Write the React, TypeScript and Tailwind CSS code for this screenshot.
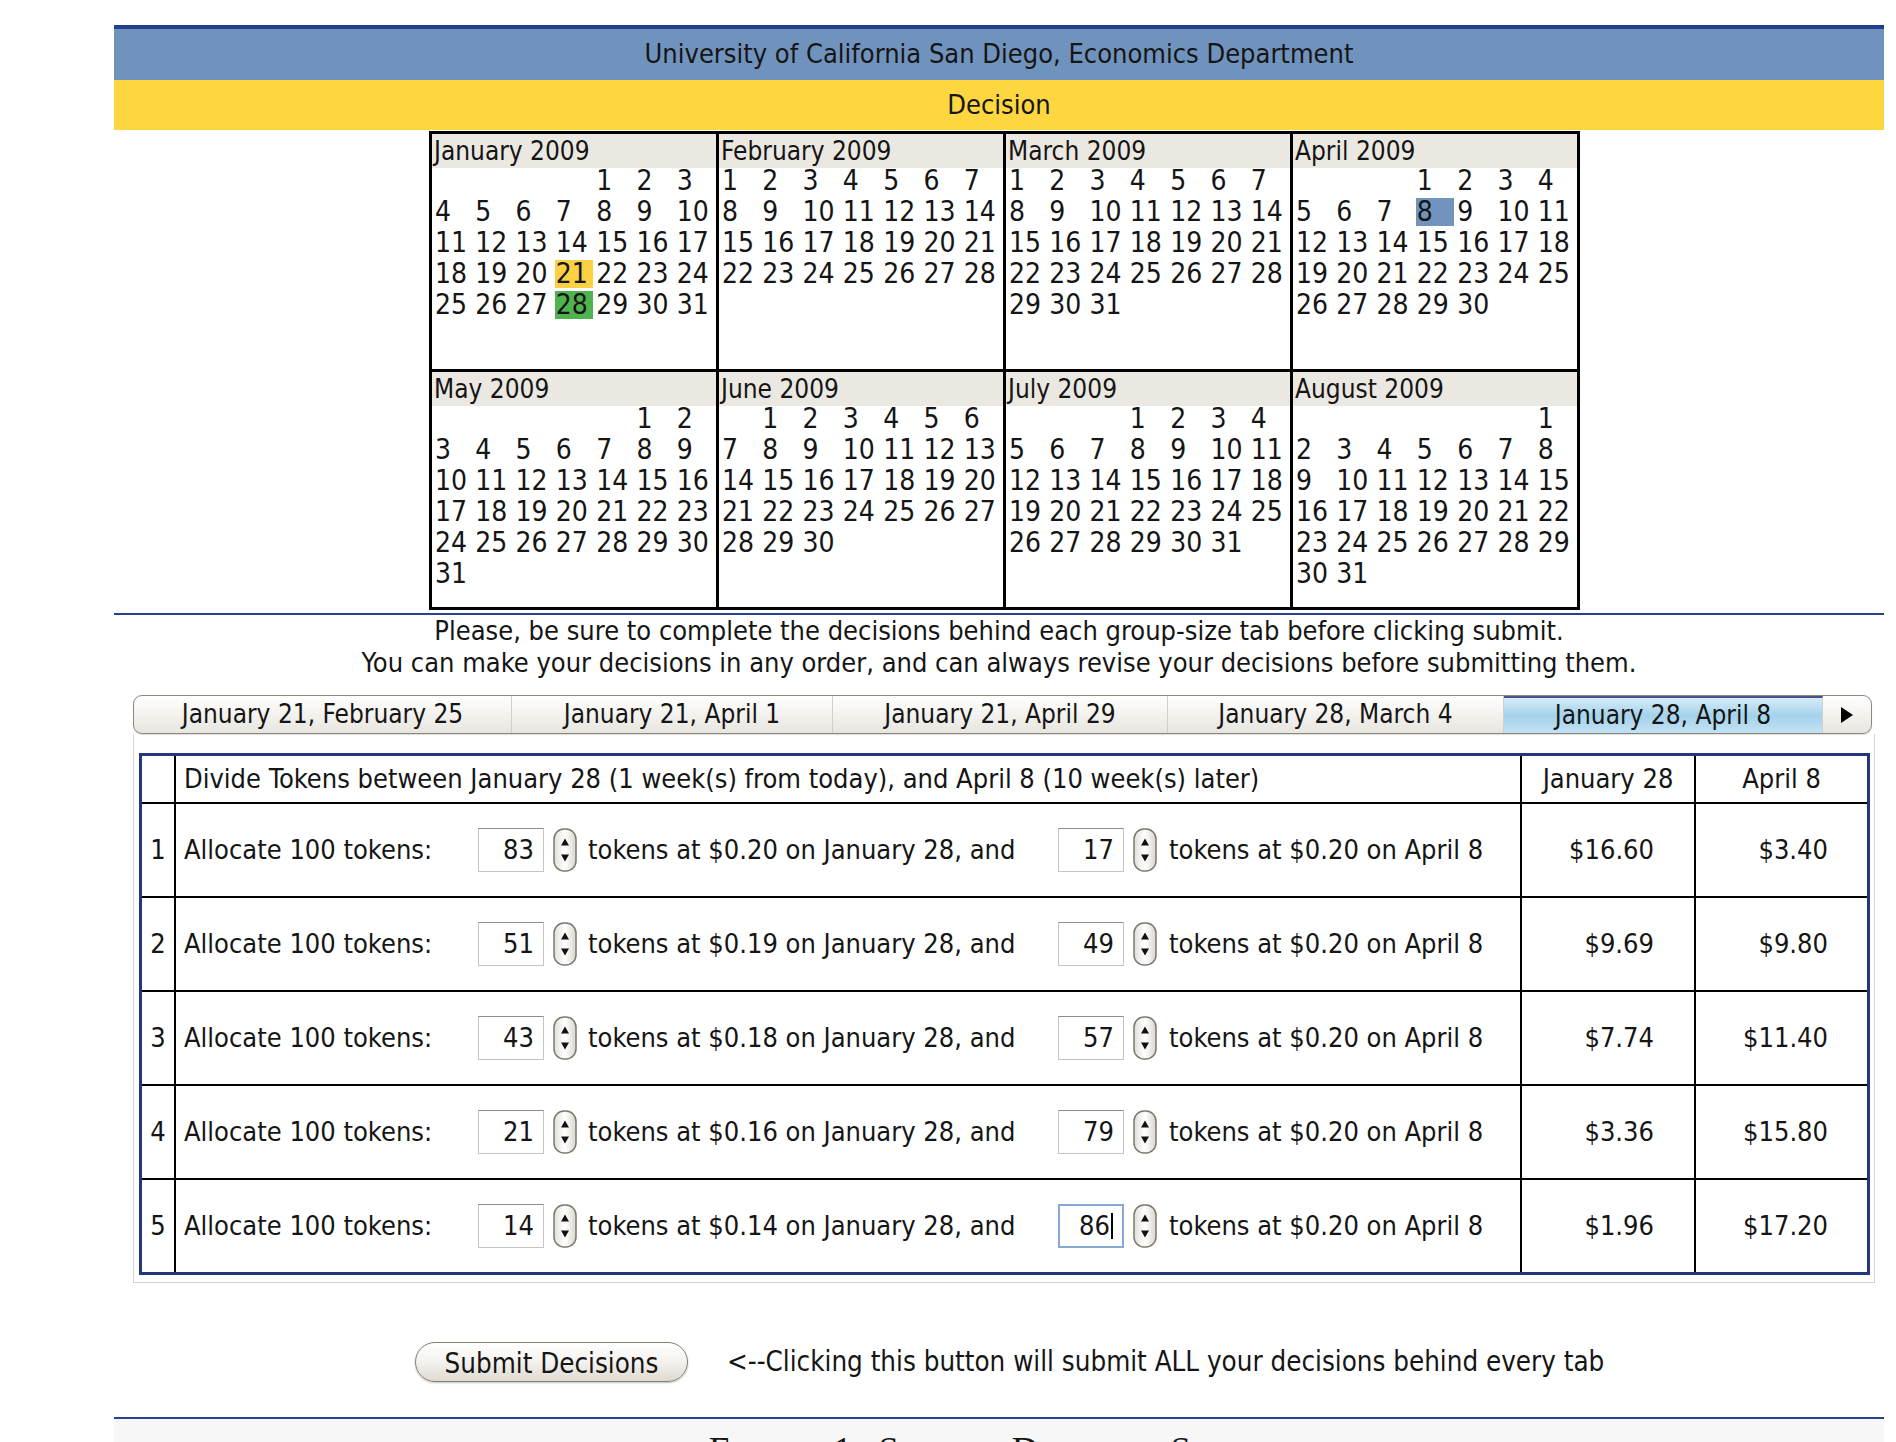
import React from "react";

const FONT = "font-['Liberation_Sans_Narrow','DejaVu_Sans_Condensed','Liberation_Sans',sans-serif]";

const MONTHS = ["January", "February", "March", "April", "May", "June", "July", "August"];

// days that are marked on the calendar (month index - day)
const marks: Record<string, string> = {
  "0-21": "bg-[#fbd043]",
  "0-28": "bg-[#4fb44f]",
  "3-8": "bg-[#7094bd]",
};

const tabs = [
  { t: "January 21, February 25", w: "w-[378px]" },
  { t: "January 21, April 1", w: "w-[321px]" },
  { t: "January 21, April 29", w: "w-[335px]" },
  { t: "January 28, March 4", w: "w-[336px]" },
  { t: "January 28, April 8", w: "w-[319px]", sel: true },
];

const rows = [
  { a: 83, b: 17, rate: "0.20", x: "$16.60", y: "$3.40" },
  { a: 51, b: 49, rate: "0.19", x: "$9.69", y: "$9.80" },
  { a: 43, b: 57, rate: "0.18", x: "$7.74", y: "$11.40" },
  { a: 21, b: 79, rate: "0.16", x: "$3.36", y: "$15.80" },
  { a: 14, b: 86, rate: "0.14", x: "$1.96", y: "$17.20" },
];

const Spinner = () => (
  <svg width="24" height="44" viewBox="0 0 24 44">
    <defs>
      <linearGradient id="spin" x1="0" y1="0" x2="1" y2="0">
        <stop offset="0" stopColor="#e2dfd8" />
        <stop offset="0.5" stopColor="#ffffff" />
        <stop offset="1" stopColor="#d9d5cd" />
      </linearGradient>
    </defs>
    <rect x="1" y="1" width="22" height="42" rx="10" fill="url(#spin)" stroke="#7d786e" strokeWidth="1.5" />
    <path d="M8 17.5 L12 10.5 L16 17.5 Z" fill="#111" />
    <path d="M8 26.5 L12 33.5 L16 26.5 Z" fill="#111" />
  </svg>
);

function NumField({ v, focus }: { v: number; focus?: boolean }) {
  return (
    <div className="flex items-center gap-[9px]">
      <div
        className={`w-[66px] h-[44px] bg-white flex items-center justify-end pr-[9px] ${
          focus ? "border-2 border-[#86a9d6]" : "border border-[#c4c4c4] border-t-[#8e8e8e]"
        }`}
      >
        {v}
        {focus && <span className="w-[2px] h-[26px] bg-black ml-[1px]" />}
      </div>
      <Spinner />
    </div>
  );
}

function Month({ m }: { m: number }) {
  const first = new Date(2009, m, 1).getDay();
  const count = new Date(2009, m + 1, 0).getDate();
  const cells: (number | null)[] = [
    ...Array(first).fill(null),
    ...Array.from({ length: count }, (_, i) => i + 1),
  ];
  return (
    <div className="bg-white h-[235px]">
      <div className="bg-[#ebe8e2] h-[34px] leading-[34px] pl-[2px] text-[26px]">
        {MONTHS[m]} 2009
      </div>
      <div className="grid grid-cols-7 pl-[2px] -mt-[3px] text-[28px]">
        {cells.map((d, i) => (
          <div key={i} className="h-[31px] flex items-center">
            {d && (
              <span className={`inline-block w-[38px] h-[28px] leading-[28px] pl-[1px] ${marks[`${m}-${d}`] ?? ""}`}>
                {d}
              </span>
            )}
          </div>
        ))}
      </div>
    </div>
  );
}

export default function App() {
  return (
    <div className={`min-h-screen bg-white text-[#151515] ${FONT}`}>
      <div className="ml-[114px] w-[1770px] pt-[25px]">
        {/* TITLE BANDS */}
        <div className="border-t-4 border-[#23408f] bg-[#7093bd] h-[55px] flex items-center justify-center text-[27px]">
          University of California San Diego, Economics Department
        </div>
        <div className="bg-[#fed640] h-[50px] flex items-center justify-center text-[27px]">Decision</div>

        {/* CALENDAR */}
        <div className="ml-[315px] mt-[1px] w-[1151px] bg-black p-[3px] grid grid-cols-4 gap-[3px]">
          {MONTHS.map((_, m) => (
            <Month key={m} m={m} />
          ))}
        </div>

        <div className="mt-[3px] h-[2px] bg-[#2a3f8f]" />

        {/* INSTRUCTIONS */}
        <div className="text-center text-[27px] leading-[32px]">
          <div>Please, be sure to complete the decisions behind each group-size tab before clicking submit.</div>
          <div>You can make your decisions in any order, and can always revise your decisions before submitting them.</div>
        </div>

        {/* TABS */}
        <div className="mt-[16px] ml-[19px] w-[1742px] text-[26px]">
          <div className="w-[1739px] h-[39px] rounded-[9px] border border-[#8d887e] overflow-hidden flex bg-linear-to-b from-white to-[#e8e5de] shadow-[0_1px_1px_rgba(0,0,0,0.15)]">
            {tabs.map((tab) => (
              <div
                key={tab.t}
                className={`${tab.w} h-full flex items-center justify-center border-r border-[#d3cfc7] ${
                  tab.sel ? "bg-linear-to-b from-[#d6ecf7] via-[#a4d2eb] to-[#c2e2f3] border-t-2 border-t-[#4a4f8e]" : ""
                }`}
              >
                {tab.t}
              </div>
            ))}
            <div className="flex-1 flex items-center justify-center">
              <svg width="14" height="18" viewBox="0 0 14 18">
                <path d="M1 1 L13 9 L1 17 Z" fill="#000" />
              </svg>
            </div>
          </div>

          <div className="border border-t-0 border-[#d4d1ca] pt-[19px] pl-[5px] pb-[7px]">
            {/* TABLE */}
            <div className="w-[1731px] border-[3px] border-[#22377d] bg-black grid grid-cols-[32px_1344px_172px_171px] gap-[2px] text-[27px]">
              <div className="bg-white h-[46px]" />
              <div className="bg-white h-[46px] flex items-center pl-[8px]">
                Divide Tokens between January 28 (1 week(s) from today), and April 8 (10 week(s) later)
              </div>
              <div className="bg-white h-[46px] flex items-center justify-center">January 28</div>
              <div className="bg-white h-[46px] flex items-center justify-center">April 8</div>

              {rows.map((r, i) => (
                <React.Fragment key={i}>
                  <div className="bg-white h-[92px] flex items-center justify-center">{i + 1}</div>
                  <div className="bg-white h-[92px] flex items-center pl-[8px] whitespace-nowrap">
                    <div className="w-[294px]">Allocate 100 tokens:</div>
                    <NumField v={r.a} />
                    <div className="w-[481px] pl-[11px]">tokens at ${r.rate} on January 28, and</div>
                    <NumField v={r.b} focus={i === 4} />
                    <div className="pl-[12px]">tokens at $0.20 on April 8</div>
                  </div>
                  <div className="bg-white h-[92px] flex items-center justify-end pr-[40px]">{r.x}</div>
                  <div className="bg-white h-[92px] flex items-center justify-end pr-[39px]">{r.y}</div>
                </React.Fragment>
              ))}
            </div>
          </div>
        </div>

        {/* SUBMIT */}
        <div className="mt-[58px] pl-[301px] flex items-center gap-[39px] text-[27.5px]">
          <button className="w-[273px] h-[40px] rounded-full border-[1.5px] border-[#857f73] bg-linear-to-b from-white via-[#f4f2ee] to-[#dedad2] shadow-[0_1px_2px_rgba(0,0,0,0.25)]">
            Submit Decisions
          </button>
          <span>&lt;--Clicking this button will submit ALL your decisions behind every tab</span>
        </div>

        <div className="mt-[35px] h-[2px] bg-[#2a3f8f]" />
        <div className="bg-[#f7f7f7] pt-[13px] h-[80px] text-center font-['Liberation_Serif',serif] text-[37px] leading-none [font-variant:small-caps] tracking-[0.06em]">
          Figure 1: Sample Decision Screen
        </div>
      </div>
    </div>
  );
}
